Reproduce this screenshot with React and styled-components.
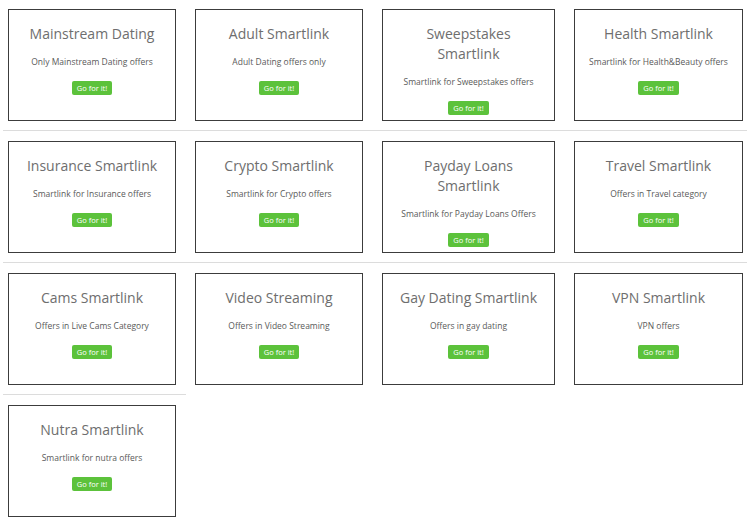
import styled, { createGlobalStyle } from 'styled-components';

const GlobalStyle = createGlobalStyle`
  body {
    margin: 0;
    background: #fff;
    font-family: 'Open Sans', 'Liberation Sans', sans-serif;
  }
`;

const Page = styled.div`
  width: 750px;
  padding-top: 9px;
`;

const Row = styled.div`
  display: grid;
  grid-template-columns: 168px 168px 173px 169px;
  column-gap: 19px;
  padding-left: 8px;
`;

const Divider = styled.div`
  height: 1px;
  background: #dcdcdc;
  margin: 9px 3px 10px 3px;
  width: ${(p) => (p.short ? '183px' : 'auto')};
`;

const Card = styled.div`
  box-sizing: border-box;
  height: 112px;
  border: 1px solid #3c3c3c;
  display: flex;
  flex-direction: column;
  align-items: center;
  padding: 14px 8px 0;
  text-align: center;
`;

const Title = styled.h3`
  margin: 0;
  font-size: 14px;
  line-height: 20px;
  font-weight: 400;
  color: #6e6e6e;
  padding: 0 ${(p) => (p.narrow ? '20px' : '0')};
`;

const Description = styled.p`
  margin: 12px 0 0;
  font-size: 8.5px;
  line-height: 12px;
  color: #5a5a5a;
  white-space: nowrap;
`;

const GoButton = styled.button`
  margin-top: 13px;
  border: none;
  border-radius: 2px;
  background: #5cc23b;
  color: #fff;
  font-family: 'Open Sans', 'Liberation Sans', sans-serif;
  font-size: 7.5px;
  line-height: 14px;
  padding: 0 5px;
  cursor: pointer;
`;

const rows = [
  [
    { title: 'Mainstream Dating', text: 'Only Mainstream Dating offers' },
    { title: 'Adult Smartlink', text: 'Adult Dating offers only' },
    { title: 'Sweepstakes Smartlink', text: 'Smartlink for Sweepstakes offers', narrow: true },
    { title: 'Health Smartlink', text: 'Smartlink for Health&Beauty offers' },
  ],
  [
    { title: 'Insurance Smartlink', text: 'Smartlink for Insurance offers' },
    { title: 'Crypto Smartlink', text: 'Smartlink for Crypto offers' },
    { title: 'Payday Loans Smartlink', text: 'Smartlink for Payday Loans Offers', narrow: true },
    { title: 'Travel Smartlink', text: 'Offers in Travel category' },
  ],
  [
    { title: 'Cams Smartlink', text: 'Offers in Live Cams Category' },
    { title: 'Video Streaming', text: 'Offers in Video Streaming' },
    { title: 'Gay Dating Smartlink', text: 'Offers in gay dating' },
    { title: 'VPN Smartlink', text: 'VPN offers' },
  ],
  [{ title: 'Nutra Smartlink', text: 'Smartlink for nutra offers' }],
];

const App = () => {
  return (
    <Page>
      <GlobalStyle />
      {rows.map((row, i) => (
        <div key={i}>
          <Row>
            {row.map((item) => (
              <Card key={item.title}>
                <Title narrow={item.narrow}>{item.title}</Title>
                <Description>{item.text}</Description>
                <GoButton>Go for it!</GoButton>
              </Card>
            ))}
          </Row>
          {i < rows.length - 1 && <Divider short={i === rows.length - 2} />}
        </div>
      ))}
    </Page>
  );
};

export default App;
